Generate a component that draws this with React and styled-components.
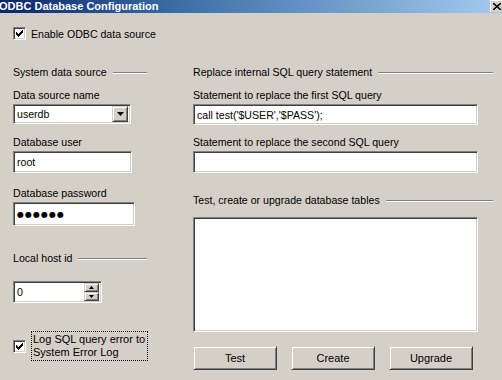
import styled, { createGlobalStyle } from "styled-components";

const Global = createGlobalStyle`
  html, body {
    margin: 0;
    padding: 0;
    background: #d4d0c8;
  }
  body {
    font-family: "Liberation Sans", Arial, sans-serif;
    font-size: 10.6px;
    color: #000;
  }
`;

const Window = styled.div`
  width: 502px;
  height: 380px;
  overflow: hidden;
  background: #d4d0c8;
  display: flex;
  flex-direction: column;
`;

const TitleBar = styled.div`
  width: 502px;
  height: 13px;
  display: flex;
  align-items: center;
  justify-content: space-between;
  background: linear-gradient(90deg, #0a246a 0%, #3a6ea5 35%, #a6caf0 100%);
  color: #fff;
  font-weight: bold;
  font-size: 11px;
`;

const TitleText = styled.span`
  line-height: 13px;
  margin-left: -1px;
`;

const CloseButton = styled.div`
  width: 12px;
  height: 12px;
  margin-bottom: 1px;
  background: #d4d0c8;
  border-top: 1px solid #fff;
  border-left: 1px solid #fff;
  box-sizing: border-box;
  display: flex;
  align-items: center;
  justify-content: center;
`;

const Body = styled.div`
  padding: 14px 9px 0 13px;
  display: flex;
  flex-direction: column;
`;

const CheckRow = styled.label`
  display: flex;
  align-items: center;
  gap: 5px;
  white-space: nowrap;
  margin-top: ${(p) => p.$mt || 0}px;
`;

const CheckBox = styled.span`
  width: 13px;
  height: 13px;
  box-sizing: border-box;
  flex: none;
  background: #fff;
  border: 1px solid;
  border-color: #808080 #fff #fff #808080;
  box-shadow: inset 1px 1px #404040, inset -1px -1px #d4d0c8;
  display: flex;
  align-items: center;
  justify-content: center;
`;

const Columns = styled.div`
  display: grid;
  grid-template-columns: 134px 300px;
  column-gap: 46px;
  margin-top: 26px;
`;

const Column = styled.div`
  display: flex;
  flex-direction: column;
`;

const GroupHeader = styled.div`
  display: flex;
  align-items: center;
  gap: 6px;
  height: 13px;
  line-height: 13px;
  margin-top: ${(p) => p.$mt || 0}px;
  white-space: nowrap;

  &::after {
    content: "";
    flex: 1;
    height: 1px;
    background: #808080;
    border-bottom: 1px solid #fff;
    margin-top: 1px;
  }
`;

const Label = styled.div`
  height: 13px;
  line-height: 13px;
  margin-top: ${(p) => p.$mt || 0}px;
  white-space: nowrap;
`;

const sunken = `
  box-sizing: border-box;
  background: #fff;
  border: 1px solid;
  border-color: #808080 #fff #fff #808080;
  box-shadow: inset 1px 1px #404040, inset -1px -1px #d4d0c8;
`;

const TextBox = styled.input`
  ${sunken}
  width: ${(p) => p.$w}px;
  height: ${(p) => p.$h || 22}px;
  margin-top: 2px;
  padding: 0 3px;
  font-family: "Liberation Sans", Arial, sans-serif;
  font-size: 10.6px;
  color: #000;
  outline: none;
`;

const PasswordBox = styled.div`
  ${sunken}
  width: 122px;
  height: 24px;
  margin-top: 2px;
  padding: 0 3px;
  display: flex;
  align-items: center;
  font-family: "DejaVu Sans", sans-serif;
  font-size: 8px;
  letter-spacing: 1px;
`;

const Combo = styled.div`
  ${sunken}
  width: 118px;
  height: 20px;
  margin-top: 2px;
  display: flex;
  align-items: center;
  padding: 2px 2px 2px 3px;
`;

const ComboText = styled.span`
  flex: 1;
`;

const raised = `
  box-sizing: border-box;
  background: #d4d0c8;
  border: 1px solid;
  border-color: #d4d0c8 #404040 #404040 #d4d0c8;
  box-shadow: inset 1px 1px #fff, inset -1px -1px #808080;
`;

const DropButton = styled.div`
  ${raised}
  width: 16px;
  height: 16px;
  display: flex;
  align-items: center;
  justify-content: center;
`;

const Spinner = styled.div`
  ${sunken}
  width: 89px;
  height: 22px;
  margin-top: 16px;
  display: flex;
  align-items: center;
  padding: 2px 2px 2px 3px;
`;

const SpinValue = styled.span`
  flex: 1;
`;

const SpinButtons = styled.div`
  display: flex;
  flex-direction: column;
  width: 15px;
  height: 18px;
`;

const SpinButton = styled.div`
  ${raised}
  flex: 1;
  display: flex;
  align-items: center;
  justify-content: center;
`;

const FocusText = styled.span`
  border: 1px dotted #000;
  padding: 1px 2px 1px 1px;
  line-height: 13px;
  font-size: 11px;
`;

const TextArea = styled.div`
  ${sunken}
  width: 285px;
  height: 115px;
  margin-top: 10px;
`;

const ButtonRow = styled.div`
  display: flex;
  gap: 14px;
  margin-top: 14px;
`;

const Button = styled.button`
  ${raised}
  width: 84px;
  height: 24px;
  font-family: "Liberation Sans", Arial, sans-serif;
  font-size: 11px;
  color: #000;
  padding: 0;
`;

const Check = () => (
  <svg width="7" height="7" viewBox="0 0 7 7">
    <path
      d="M0 2h1v1h1v1h1V3h1V2h1V1h1V0h1v3H6v1H5v1H4v1H3v1H2V6H1V5H0z"
      fill="#000"
    />
  </svg>
);

const Arrow = ({ up, size = 7 }) => {
  const h = Math.ceil(size / 2);
  return (
    <svg width={size} height={h} viewBox={`0 0 ${size} ${h}`}>
      <polygon
        points={
          up
            ? `${size / 2},0 ${size},${h} 0,${h}`
            : `0,0 ${size},0 ${size / 2},${h}`
        }
        fill="#000"
      />
    </svg>
  );
};

export default function App() {
  return (
    <Window>
      <Global />
      <TitleBar>
        <TitleText>ODBC Database Configuration</TitleText>
        <CloseButton>
          <svg width="8" height="7" viewBox="0 0 8 7">
            <path d="M0 0l8 7M8 0L0 7" stroke="#000" strokeWidth="1.5" />
          </svg>
        </CloseButton>
      </TitleBar>
      <Body>
        <CheckRow>
          <CheckBox>
            <Check />
          </CheckBox>
          Enable ODBC data source
        </CheckRow>

        <Columns>
          <Column>
            <GroupHeader>System data source</GroupHeader>
            <Label $mt={10}>Data source name</Label>
            <Combo>
              <ComboText>userdb</ComboText>
              <DropButton>
                <Arrow />
              </DropButton>
            </Combo>
            <Label $mt={12}>Database user</Label>
            <TextBox $w={119} readOnly defaultValue="root" />
            <Label $mt={14}>Database password</Label>
            <PasswordBox>●●●●●●</PasswordBox>
            <GroupHeader $mt={26}>Local host id</GroupHeader>
            <Spinner>
              <SpinValue>0</SpinValue>
              <SpinButtons>
                <SpinButton>
                  <Arrow up size={5} />
                </SpinButton>
                <SpinButton>
                  <Arrow size={5} />
                </SpinButton>
              </SpinButtons>
            </Spinner>
            <CheckRow $mt={28}>
              <CheckBox>
                <Check />
              </CheckBox>
              <FocusText>
                Log SQL query error to
                <br />
                System Error Log
              </FocusText>
            </CheckRow>
          </Column>

          <Column>
            <GroupHeader>Replace internal SQL query statement</GroupHeader>
            <Label $mt={10}>Statement to replace the first SQL query</Label>
            <TextBox $w={285} $h={21} readOnly defaultValue="call test('$USER','$PASS');" />
            <Label $mt={11}>Statement to replace the second SQL query</Label>
            <TextBox $w={285} readOnly defaultValue="" />
            <GroupHeader $mt={21}>Test, create or upgrade database tables</GroupHeader>
            <TextArea />
            <ButtonRow>
              <Button>Test</Button>
              <Button>Create</Button>
              <Button>Upgrade</Button>
            </ButtonRow>
          </Column>
        </Columns>
      </Body>
    </Window>
  );
}
